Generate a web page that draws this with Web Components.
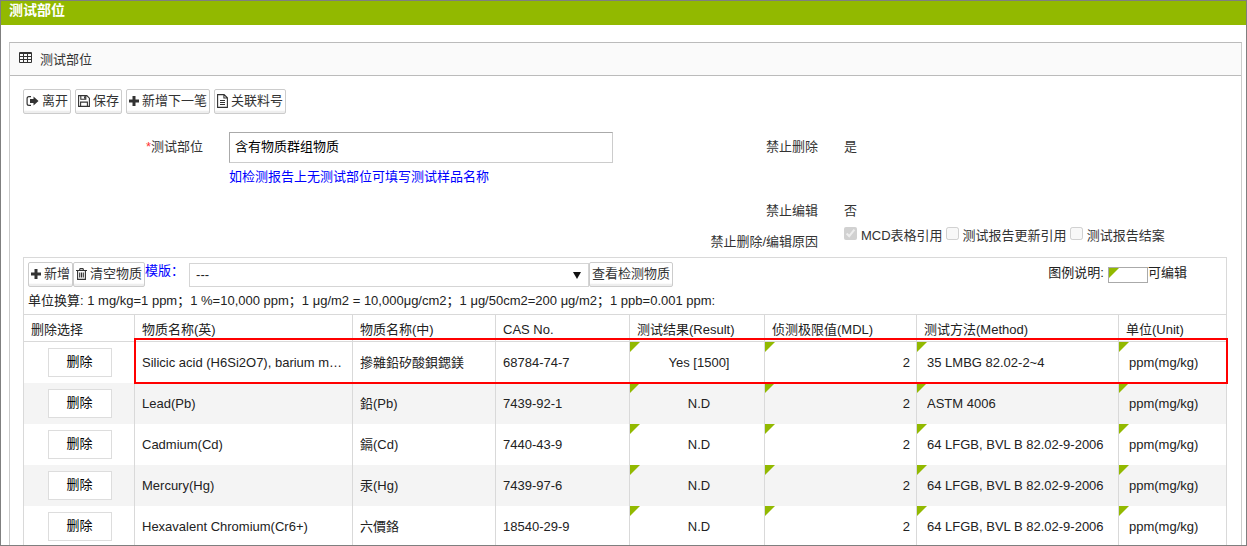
<!DOCTYPE html>
<html lang="zh-CN">
<head>
<meta charset="utf-8">
<title>测试部位</title>
<style>
  html, body { margin: 0; }
  body {
    font: 13px/20px "Liberation Sans", "Noto Sans CJK SC", sans-serif;
    color: #333;
    background: #fff;
  }
</style>
</head>
<body>
<app-window heading="测试部位">
  <data-panel heading="测试部位">
    <tool-bar>
      <icon-button icon="exit">离开</icon-button>
      <icon-button icon="save">保存</icon-button>
      <icon-button icon="plus">新增下一笔</icon-button>
      <icon-button icon="file">关联料号</icon-button>
    </tool-bar>
    <part-form></part-form>
    <substance-grid></substance-grid>
  </data-panel>
</app-window>

<script>
const define = (name, html, setup) => {
  const template = document.createElement('template');
  template.innerHTML = '<style>*{box-sizing:border-box}</style>' + html;
  customElements.define(name, class extends HTMLElement {
    constructor() {
      super();
      this.attachShadow({ mode: 'open' }).append(template.content.cloneNode(true));
    }
    connectedCallback() { if (setup) setup(this.shadowRoot, this); }
  });
};

/* Each icon: [width, path markup]; all are 14 units high. */
const ICONS = {
  table: [13, '<path fill-rule="evenodd" d="M1 1h11a1 1 0 0 1 1 1v9a1 1 0 0 1-1 1H1a1 1 0 0 1-1-1V2a1 1 0 0 1 1-1zM1 3v2h3V3zM5 3v2h3V3zM9 3v2h3V3zM1 6v2h3V6zM5 6v2h3V6zM9 6v2h3V6zM1 9v2h3V9zM5 9v2h3V9zM9 9v2h3V9z"/>'],
  exit: [13, '<path d="M5 2H3A2.500 2.500 0 0 0 .5 4.500v5A2.500 2.500 0 0 0 3 12h2v-1.200H3A1.300 1.300 0 0 1 1.700 9.500v-5A1.300 1.300 0 0 1 3 3.200h2z"/><path d="M4 5h3.500V2.500L12.500 7l-5 4.500V9H4z"/>'],
  save: [12, '<path fill="none" stroke="currentColor" stroke-width="1.100" d="M.6 1.600h8.200l2.600 2.600v8.200H.6zM2.600 12V8.100h6.800V12M2.800 2v3.300h5V2M6.600 2.500v2"/>'],
  plus: [10, '<path d="M3.500 2h3v3.500H10v3H6.500V12h-3V8.500H0v-3h3.500z"/>'],
  file: [11, '<path fill="none" stroke="currentColor" stroke-width="1.100" d="M.6.6h6.500l3.300 3.200v9.600H.6zM6.900.8V4h3.300M3 6.500h5M3 8.500h5M3 10.500h5"/>'],
  trash: [11, '<path fill="none" stroke="currentColor" stroke-width="1.100" d="M0 3.500h11M3.500 3.300l.6-1.700h2.800l.6 1.700M1.600 3.700v8.700h7.800V3.700M3.700 5.500v5M5.500 5.500v5M7.300 5.500v5"/>']
};

define('glyph-icon', `
  <style>
    :host { display: inline-block; }
    svg { display: block; height: 14px; }
  </style>
  <svg fill="currentColor" aria-hidden="true"></svg>`,
  (root, host) => {
    const name = host.getAttribute('name');
    if (!name) return;
    const [width, shape] = ICONS[name];
    const svg = root.querySelector('svg');
    svg.setAttribute('width', width);
    svg.setAttribute('viewBox', `0 0 ${width} 14`);
    svg.innerHTML = shape;
  });

define('icon-button', `
  <style>
    :host { display: inline-flex; }
    button {
      display: flex; align-items: center; gap: 3px;
      height: 25px; padding: 0 2px 2px; margin: 0;
      font: inherit; color: #333; white-space: nowrap;
      border: 1px solid #ccc; border-radius: 2px;
      background: linear-gradient(#fff 88%, #eee 92%);
    }
    glyph-icon[hidden] { display: none; }
  </style>
  <button type="button"><glyph-icon hidden></glyph-icon><span><slot></slot></span></button>`,
  (root, host) => {
    const name = host.getAttribute('icon');
    if (!name) return;
    const icon = document.createElement('glyph-icon');
    icon.setAttribute('name', name);
    root.querySelector('glyph-icon').replaceWith(icon);
  });

define('tool-bar', `
  <style>:host { display: flex; gap: 4px; }</style><slot></slot>`);

define('app-window', `
  <style>
    :host { display: flex; flex-direction: column; height: 100vh; box-sizing: border-box; border: 1px solid #7f7f7f; }
    header { flex: none; height: 24px; padding: 0 8px; background: #92b900; }
    h1 { margin: 0; font-size: 14px; line-height: 19px; color: #fff; }
    main { flex: 1; min-height: 0; overflow-y: auto; scrollbar-width: none; padding: 17px 4px 0 8px; }
  </style>
  <header><h1></h1></header>
  <main><slot></slot></main>`,
  (root, host) => { root.querySelector('h1').textContent = host.getAttribute('heading'); });

define('data-panel', `
  <style>
    :host { display: block; border: 1px solid #ccc; border-top-color: #bbb; }
    header { display: flex; align-items: center; gap: 8px; height: 33px; padding: 2px 9px 0; background: #fafafa; border-bottom: 1px solid #bbb; }
    glyph-icon { margin-bottom: 4px; }
    h2 { margin: 0; font-size: 13px; font-weight: normal; }
    section { padding: 13px 14px 20px 13px; }
  </style>
  <header><glyph-icon name="table"></glyph-icon><h2></h2></header>
  <section><slot></slot></section>`,
  (root, host) => { root.querySelector('h2').textContent = host.getAttribute('heading'); });

define('part-form', `
  <style>
    :host { display: grid; grid-template-columns: 1fr 1fr; padding-top: 18px; min-height: 143px; box-sizing: border-box; }
    .row { display: grid; grid-template-columns: 180px 1fr; column-gap: 26px; }
    .name { text-align: right; }
    .left .name { padding-top: 5px; }
    .required { color: #f33; }
    input[type=text] {
      display: block; width: 100%; max-width: 384px; height: 31px; padding: 0 5px 4px;
      font: inherit; color: #000; background: #fff;
      border: 1px solid #ccc; border-color: #aaa #ccc #ccc #aaa;
    }
    p { margin: 4px 0 0; color: #00f; }
    .right { display: grid; grid-template-rows: 64px 28px 1fr; padding-top: 5px; }
    .right .row { grid-template-columns: 193px 1fr; }
    .reason .name { padding-top: 3px; }
    .checks { display: flex; gap: 3px; height: 20px; margin-top: -3px; white-space: nowrap; }
    .checks label { display: flex; gap: 4px; }
    .checks input { width: 13px; height: 13px; margin: 1px 0 0; }
  </style>
  <div class="left">
    <div class="row">
      <label class="name" for="part"><span class="required">*</span>测试部位</label>
      <div>
        <input id="part" type="text" value="含有物质群组物质">
        <p>如检测报告上无测试部位可填写测试样品名称</p>
      </div>
    </div>
  </div>
  <div class="right">
    <div class="row"><span class="name">禁止删除</span><span>是</span></div>
    <div class="row"><span class="name">禁止编辑</span><span>否</span></div>
    <div class="row reason">
      <span class="name">禁止删除/编辑原因</span>
      <div class="checks">
        <label><input type="checkbox" checked disabled><span>MCD表格引用</span></label>
        <label><input type="checkbox" disabled><span>测试报告更新引用</span></label>
        <label><input type="checkbox" disabled><span>测试报告结案</span></label>
      </div>
    </div>
  </div>`);

const ROWS = [
  ['Silicic acid (H6Si2O7), barium m…', '摻雜鉛矽酸鋇鍶鎂', '68784-74-7', 'Yes [1500]', '2', '35 LMBG 82.02-2~4'],
  ['Lead(Pb)', '鉛(Pb)', '7439-92-1', 'N.D', '2', 'ASTM 4006'],
  ['Cadmium(Cd)', '鎘(Cd)', '7440-43-9', 'N.D', '2', '64 LFGB, BVL B 82.02-9-2006'],
  ['Mercury(Hg)', '汞(Hg)', '7439-97-6', 'N.D', '2', '64 LFGB, BVL B 82.02-9-2006'],
  ['Hexavalent Chromium(Cr6+)', '六價鉻', '18540-29-9', 'N.D', '2', '64 LFGB, BVL B 82.02-9-2006']
];

define('substance-grid', `
  <style>
    :host { display: block; color: #222; border: 1px solid #d9d9d9; }
    .bar { display: flex; height: 33px; padding: 4px 39px 0 4px; }
    .template { color: #00f; line-height: 18px; }
    .picker { position: relative; margin: 1px 0 0 5px; }
    select {
      width: 400px; height: 24px; padding: 0 6px; appearance: none;
      font: inherit; color: #222; background: #fff; border: 1px solid #d5d5d5; border-radius: 0;
    }
    .picker::after {
      content: ""; position: absolute; right: 8px; top: 9px; pointer-events: none;
      border: 4px solid transparent; border-top: 7px solid #111; border-bottom: 0;
    }
    .legend { display: flex; align-items: flex-start; margin-left: auto; padding-top: 1px; white-space: nowrap; }
    .swatch { position: relative; width: 40px; height: 16px; margin: 4px 0 0 4px; border: 1px solid #aaa; }
    .units { margin: 0; padding: 0 4px 3px; white-space: nowrap; overflow: hidden; }
    table { width: 100%; table-layout: fixed; border-spacing: 0; }
    th, td { padding: 0 6px 0 7px; text-align: left; font-weight: normal; border-left: 1px solid #d9d9d9; white-space: nowrap; }
    th:first-child, td:first-child { border-left: 0; }
    th { height: 28px; padding-top: 4px; border-top: 1px solid #d9d9d9; border-bottom: 1px solid #d9d9d9; }
    td { position: relative; height: 41px; }
    td span { display: block; overflow: hidden; text-overflow: ellipsis; }
    tr:nth-child(even) td { background: #f4f4f4; }
    .act { text-align: center; }
    .act button { display: block; width: 64px; height: 29px; margin: 0 auto; padding: 0 0 2px; font: inherit; color: #000; background: #fff; border: 1px solid #ddd; }
    .edit::before, .swatch::before {
      content: ""; position: absolute; left: 0; top: 0; width: 10px; height: 10px;
      background: #92b900; clip-path: polygon(0 0, 100% 0, 0 100%);
    }
    .edit { padding-left: 10px; }
    .center { text-align: center; }
    .marked td:not(.act)::after {
      content: ""; position: absolute; z-index: 1; inset: -4px 0 -1px -1px; pointer-events: none;
      border: solid #f00; border-width: 2px 0;
    }
    .num { text-align: right; }
    .marked td:nth-child(2)::after { border-left-width: 2px; }
    .marked td:last-child::after { right: -2px; border-right-width: 2px; }
  </style>
  <div class="bar">
    <icon-button icon="plus">新增</icon-button>
    <icon-button icon="trash">清空物质</icon-button>
    <label class="template" for="tpl">模版：</label>
    <div class="picker"><select id="tpl"><option>---</option></select></div>
    <icon-button>查看检测物质</icon-button>
    <div class="legend"><span>图例说明:</span><i class="swatch"></i><span>可编辑</span></div>
  </div>
  <p class="units">单位换算: 1 mg/kg=1 ppm；1 %=10,000 ppm；1 μg/m2 = 10,000μg/cm2；1 μg/50cm2=200 μg/m2；1 ppb=0.001 ppm:</p>
  <table>
    <colgroup>
      <col style="width:110px"><col style="width:218px"><col style="width:143px"><col style="width:134px">
      <col style="width:135px"><col style="width:152px"><col style="width:202px"><col style="width:108px">
    </colgroup>
    <thead><tr>
      <th>删除选择</th><th>物质名称(英)</th><th>物质名称(中)</th><th>CAS No.</th>
      <th>测试结果(Result)</th><th>侦测极限值(MDL)</th><th>测试方法(Method)</th><th>单位(Unit)</th>
    </tr></thead>
    <tbody></tbody>
  </table>`,
  root => {
    root.querySelector('tbody').innerHTML = ROWS.map(([en, zh, cas, result, mdl, method], i) => `
      <tr${i === 0 ? ' class="marked"' : ''}>
        <td class="act"><button type="button">删除</button></td>
        <td><span>${en}</span></td><td><span>${zh}</span></td><td><span>${cas}</span></td>
        <td class="edit center"><span>${result}</span></td>
        <td class="edit num"><span>${mdl}</span></td>
        <td class="edit"><span>${method}</span></td>
        <td class="edit"><span>ppm(mg/kg)</span></td>
      </tr>`).join('');
  });
</script>
</body>
</html>
